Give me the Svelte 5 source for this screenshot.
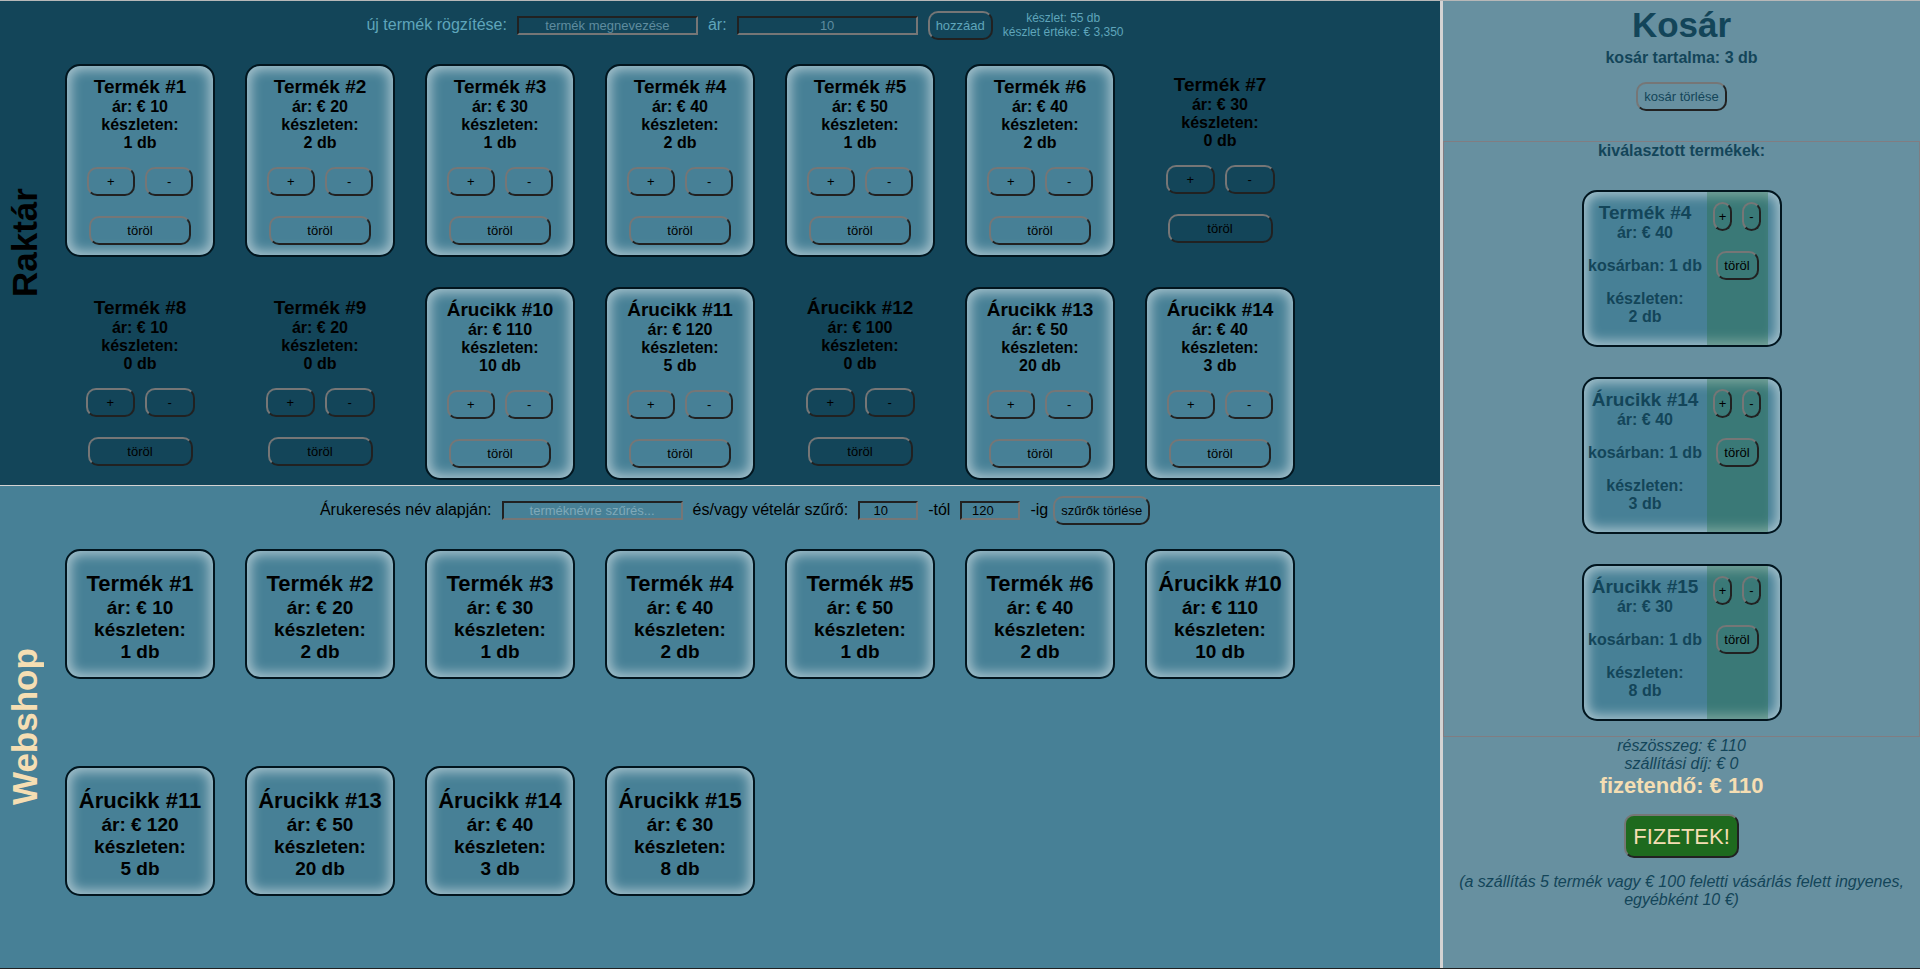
<script>
  const stock = [
    { name: 'Termék #1', price: 10, count: 1 },
    { name: 'Termék #2', price: 20, count: 2 },
    { name: 'Termék #3', price: 30, count: 1 },
    { name: 'Termék #4', price: 40, count: 2 },
    { name: 'Termék #5', price: 50, count: 1 },
    { name: 'Termék #6', price: 40, count: 2 },
    { name: 'Termék #7', price: 30, count: 0 },
    { name: 'Termék #8', price: 10, count: 0 },
    { name: 'Termék #9', price: 20, count: 0 },
    { name: 'Árucikk #10', price: 110, count: 10 },
    { name: 'Árucikk #11', price: 120, count: 5 },
    { name: 'Árucikk #12', price: 100, count: 0 },
    { name: 'Árucikk #13', price: 50, count: 20 },
    { name: 'Árucikk #14', price: 40, count: 3 }
  ];
  const shop = [
    ...stock.filter((p) => p.count > 0),
    { name: 'Árucikk #15', price: 30, count: 8 }
  ];
  const cart = [
    { name: 'Termék #4', price: 40, inCart: 1, count: 2 },
    { name: 'Árucikk #14', price: 40, inCart: 1, count: 3 },
    { name: 'Árucikk #15', price: 30, inCart: 1, count: 8 }
  ];
  let minPrice = $state(10);
  let maxPrice = $state(120);
</script>

<div class="app">
  <main>
    <section class="panel warehouse">
      <h1 class="side">Raktár</h1>
      <div class="body">
        <form class="bar">
          <label for="new-name">új termék rögzítése:</label>
          <input id="new-name" type="text" placeholder="termék megnevezése" />
          <label for="new-price">ár:</label>
          <input id="new-price" type="text" placeholder="10" />
          <button type="button">hozzáad</button>
          <p class="totals">készlet: 55 db<br />készlet értéke: € 3,350</p>
        </form>
        <div class="grid">
          {#each stock as p}
            <article class="item" class:card={p.count > 0}>
              <h3>{p.name}</h3>
              <p>ár: € {p.price}</p>
              <p>készleten:</p>
              <p>{p.count} db</p>
              <div class="pair">
                <button type="button">+</button>
                <button type="button">-</button>
              </div>
              <button type="button" class="remove">töröl</button>
            </article>
          {/each}
        </div>
      </div>
    </section>

    <section class="panel shop">
      <h1 class="side">Webshop</h1>
      <div class="body">
        <form class="bar">
          <label for="search">Árukeresés név alapján:</label>
          <input id="search" type="text" placeholder="terméknévre szűrés..." />
          <label for="min">és/vagy vételár szűrő:</label>
          <input id="min" type="number" bind:value={minPrice} />
          <label for="min">-tól</label>
          <input id="max" type="number" bind:value={maxPrice} />
          <div class="reset">
            <label for="max">-ig</label>
            <button type="button">szűrők törlése</button>
          </div>
        </form>
        <div class="grid">
          {#each shop as p}
            <article class="item card">
              <h3>{p.name}</h3>
              <p>ár: € {p.price}</p>
              <p>készleten:</p>
              <p>{p.count} db</p>
            </article>
          {/each}
        </div>
      </div>
    </section>
  </main>

  <aside>
    <h1>Kosár</h1>
    <p class="contents">kosár tartalma: 3 db</p>
    <button type="button" class="clear">kosár törlése</button>
    <section class="chosen">
      <h4>kiválasztott termékek:</h4>
      {#each cart as p}
        <article class="card line">
          <div class="info">
            <h3>{p.name}</h3>
            <p>ár: € {p.price}</p>
            <p class="gap">kosárban: {p.inCart} db</p>
            <p class="gap">készleten:</p>
            <p>{p.count} db</p>
          </div>
          <div class="actions">
            <div class="pair">
              <button type="button">+</button>
              <button type="button">-</button>
            </div>
            <button type="button" class="remove">töröl</button>
          </div>
        </article>
      {/each}
    </section>
    <p class="sum">részösszeg: € 110</p>
    <p class="sum">szállítási díj: € 0</p>
    <p class="total">fizetendő: € 110</p>
    <button type="button" class="pay">FIZETEK!</button>
    <p class="note">(a szállítás 5 termék vagy € 100 feletti vásárlás felett ingyenes, egyébként 10 €)</p>
  </aside>
</div>

<style>
  :global(body) {
    margin: 0;
  }

  .app {
    --dark: #134559;
    --mid: #478096;
    box-sizing: border-box;
    display: grid;
    grid-template-columns: 3fr 1fr;
    min-height: 100vh;
    border-top: 1px solid #b8b8b8;
    border-bottom: 1px solid #212121;
    font: 16px/18px "Liberation Sans", Arial, sans-serif;
    color: #000;
  }

  h1, h3, h4, p {
    margin: 0;
  }

  h1 {
    font-size: 35px;
    line-height: 40px;
  }

  button {
    box-sizing: border-box;
    height: 29px;
    padding: 0 6px;
    border: 2px solid;
    border-color: #767676 #212121 #212121 #767676;
    border-radius: 10px;
    background: transparent;
    color: inherit;
    font: 13px/15px "Liberation Sans", Arial, sans-serif;
  }

  input {
    box-sizing: border-box;
    width: 181px;
    height: 19px;
    padding: 0 2px;
    border: 2px solid;
    border-color: #212121 #767676 #767676 #212121;
    background: transparent;
    color: inherit;
    font: 13px/15px "Liberation Sans", Arial, sans-serif;
    text-align: center;
  }

  input[type="number"] {
    width: 60px;
  }

  input::placeholder {
    color: #5f8c9f;
  }

  main {
    display: grid;
    grid-template-rows: auto 1fr;
    min-width: 0;
  }

  .panel {
    display: flex;
    min-height: 0;
    overflow: hidden;
  }

  .warehouse {
    background: var(--dark);
  }

  .warehouse .grid {
    margin-bottom: -10px;
  }

  .shop {
    border-top: 1px solid #d3d3d3;
    background: var(--mid);
  }

  .side {
    flex: none;
    width: 50px;
    line-height: 50px;
    writing-mode: vertical-rl;
    transform: rotate(180deg);
    text-align: center;
  }

  .shop .side {
    color: wheat;
  }

  .body {
    flex: 1;
    display: flex;
    flex-direction: column;
    min-width: 0;
  }

  .bar {
    display: flex;
    flex: none;
    align-items: center;
    justify-content: center;
    gap: 10px;
    height: 48px;
  }

  .warehouse .bar {
    color: #5fa5bb;
  }

  .shop .bar {
    padding-right: 20px;
  }

  .reset {
    display: flex;
    align-items: center;
    gap: 5px;
  }

  .shop input::placeholder {
    color: #7fa9b9;
  }

  .totals {
    font-size: 12px;
    line-height: 14px;
    text-align: center;
  }

  .grid {
    flex: 1;
    display: flex;
    flex-wrap: wrap;
    align-items: flex-start;
  }

  .card {
    border: 2px solid #02151e;
    border-radius: 15px;
    background: var(--mid);
    box-shadow: inset 0 0 12px 4px rgba(255, 255, 255, 0.5);
  }

  .item {
    box-sizing: border-box;
    width: 150px;
    margin: 15px;
    padding-top: 10px;
    text-align: center;
    font-weight: bold;
  }

  h3 {
    font-size: 19px;
    line-height: 22px;
  }

  .pair {
    display: flex;
    justify-content: center;
    gap: 10px;
  }

  .warehouse .item {
    padding-bottom: 10px;
  }

  .warehouse .item .pair {
    margin: 15px 0 20px;
  }

  .warehouse .item .pair button {
    width: 33%;
  }

  .warehouse .item .remove {
    width: 70%;
  }

  .shop .item {
    height: 130px;
    padding-top: 20px;
    font-size: 19px;
    line-height: 22px;
  }

  .shop h3 {
    font-size: 22px;
    line-height: 26px;
  }

  aside {
    display: flex;
    flex-direction: column;
    align-items: center;
    padding-top: 4px;
    border-left: 3px solid #d3d3d3;
    background: #6790a0;
    color: var(--dark);
    text-align: center;
  }

  .contents {
    margin: 4px 0 15px;
    font-weight: bold;
  }

  .chosen {
    box-sizing: border-box;
    display: flex;
    flex-direction: column;
    align-items: center;
    width: 100%;
    margin-top: 30px;
    border: 1px solid #817d82;
  }

  h4 {
    margin-bottom: 15px;
    font-size: 16px;
    line-height: 18px;
  }

  .line {
    box-sizing: border-box;
    display: flex;
    width: 200px;
    height: 157px;
    margin: 15px 0;
    font-weight: bold;
  }

  .info {
    width: 123px;
    padding-top: 10px;
    white-space: nowrap;
  }

  .gap {
    margin-top: 15px;
  }

  .actions {
    width: 61px;
    padding-top: 10px;
    background: rgba(30, 107, 50, 0.3);
    color: #000;
  }

  .actions .pair {
    margin-bottom: 20px;
  }

  .actions .pair button {
    width: 19px;
    padding: 0;
  }

  .actions .remove {
    width: 43px;
  }

  .sum,
  .note {
    font-style: italic;
  }

  .total {
    color: wheat;
    font-size: 22px;
    font-weight: bold;
    line-height: 26px;
  }

  .pay {
    height: 44px;
    margin: 15px 0;
    padding: 0 7px;
    background: #1e6a1e;
    color: wheat;
    font-size: 22px;
    line-height: 25px;
  }

  .note {
    padding: 0 15px;
  }
</style>
